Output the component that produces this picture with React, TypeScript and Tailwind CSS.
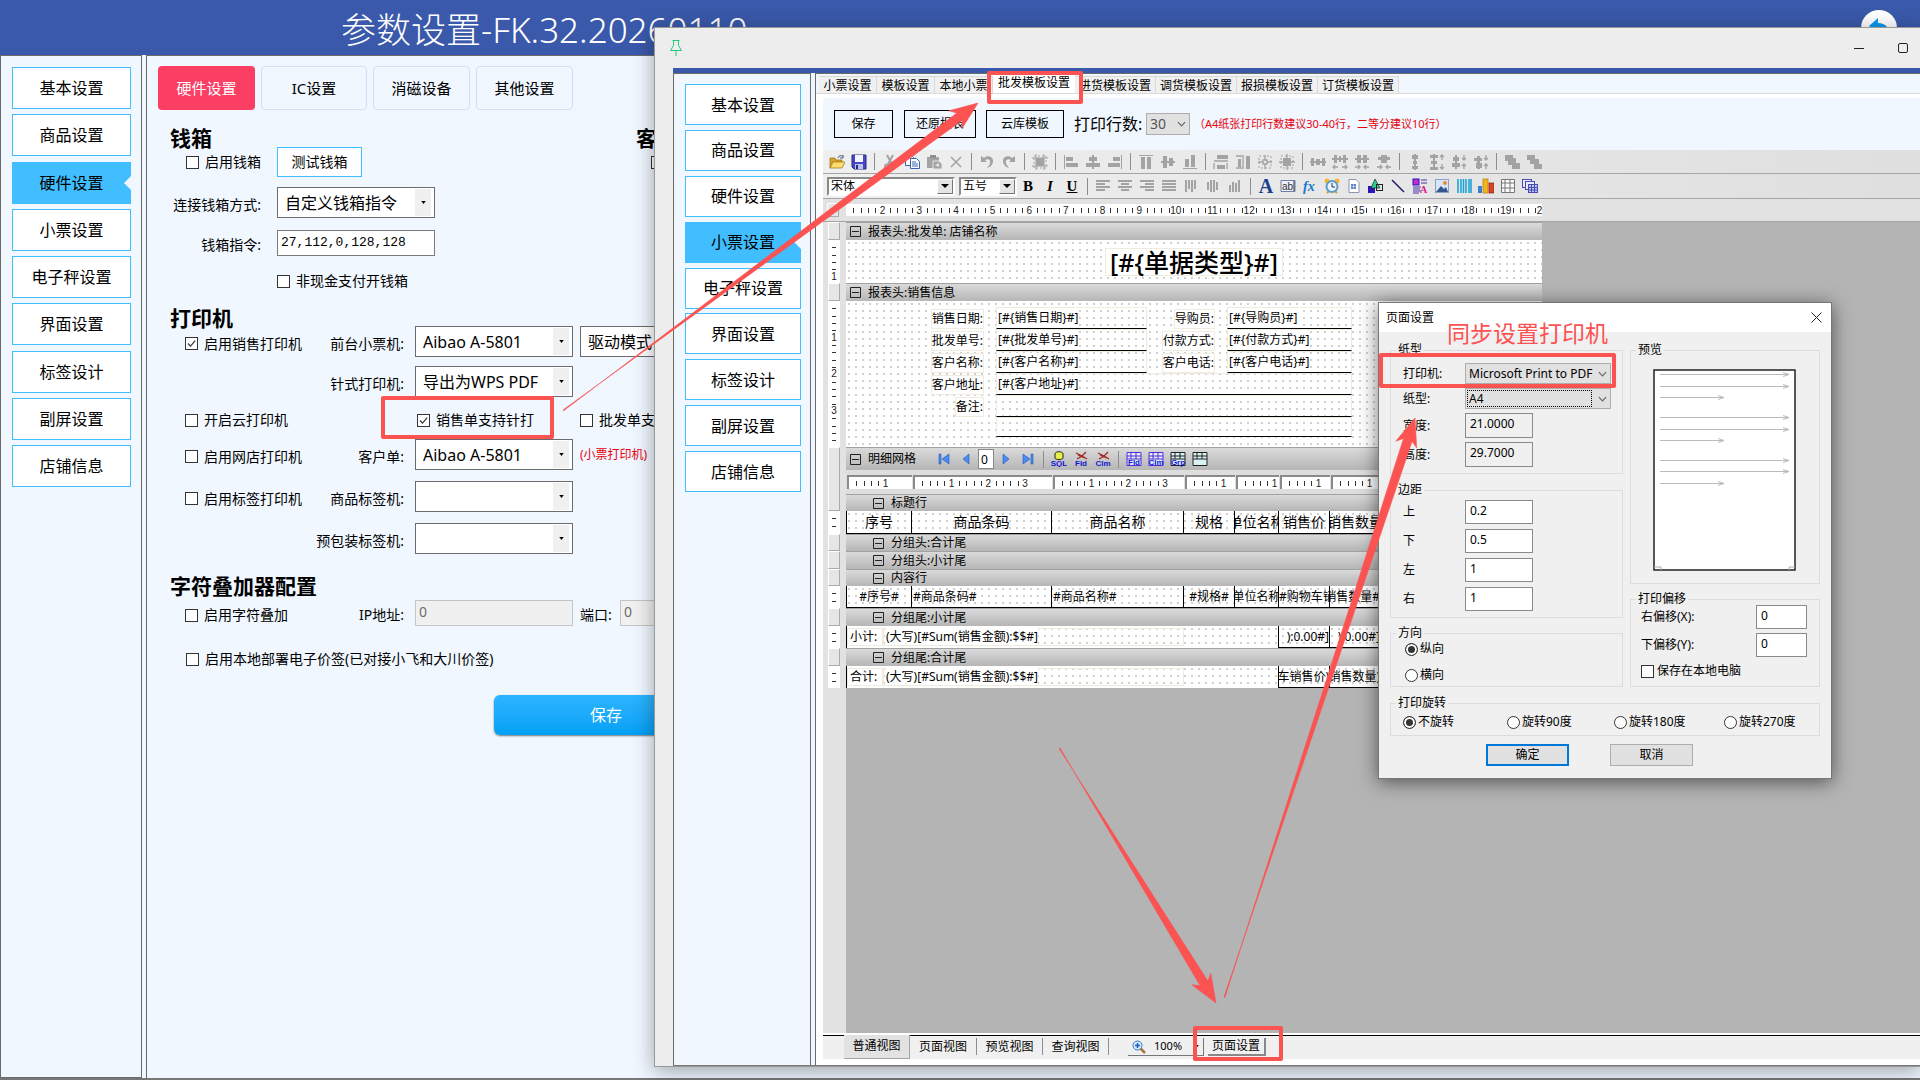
import React from 'react';

const NAV = ['基本设置', '商品设置', '硬件设置', '小票设置', '电子秤设置', '界面设置', '标签设计', '副屏设置', '店铺信息'];

/* ---------- shared controls ---------- */

interface CheckProps {
  label: string;
  checked?: boolean;
  className?: string;
  gap?: string;
}

const Check: React.FC<CheckProps> = ({ label, checked, className = '', gap = 'gap-1.5' }) => (
  <label className={`flex shrink-0 items-center whitespace-nowrap ${gap} ${className}`}>
    <span className="grid shrink-0">
      <input
        type="checkbox"
        defaultChecked={checked}
        className="peer col-start-1 row-start-1 size-[13px] appearance-none border border-[#333] bg-white"
      />
      <svg viewBox="0 0 13 13" className="pointer-events-none invisible col-start-1 row-start-1 size-[13px] peer-checked:visible">
        <path d="M3 6.5l2.5 2.7L10.2 3.6" fill="none" stroke="#333" strokeWidth="1.2" />
      </svg>
    </span>
    {label}
  </label>
);

interface ComboProps {
  id: string;
  value: string;
  className?: string;
}

const Combo: React.FC<ComboProps> = ({ id, value, className = 'w-[158px]' }) => (
  <div className={`grid h-[31px] shrink-0 ${className}`}>
    <select
      id={id}
      className="col-start-1 row-start-1 w-full appearance-none border border-[#6b6b6b] bg-white pl-[7px] text-base leading-7"
    >
      <option>{value}</option>
    </select>
    <span className="pointer-events-none col-start-1 row-start-1 mr-1 flex h-[27px] w-4 items-center justify-center self-center justify-self-end bg-[#f0f0f0]">
      <svg viewBox="0 0 6 4" className="h-[3px] w-[5px]"><path d="M0 0h6L3 4z" /></svg>
    </span>
  </div>
);

const SideNav: React.FC<{ active: string; className: string; item: string }> = ({ active, className, item }) => (
  <nav className={`flex flex-col justify-between ${className}`}>
    {NAV.map((name) =>
      name === active ? (
        <button key={name} className={`grid items-center bg-[#41beff] text-base ${item}`}>
          <span className="col-start-1 row-start-1">{name}</span>
          <svg viewBox="0 0 7 14" className="col-start-1 row-start-1 h-3.5 w-[7px] justify-self-end">
            <path d="M7 0L0 7l7 7z" fill="#f0f7ff" />
          </svg>
        </button>
      ) : (
        <button key={name} className={`border border-[#41beff] bg-white text-base ${item}`}>{name}</button>
      )
    )}
  </nav>
);

/* ---------- hardware form ---------- */

const Heading: React.FC<{ children: string; className?: string }> = ({ children, className = '' }) => (
  <h2 className={`text-[21px] leading-4 font-bold ${className}`}>{children}</h2>
);

interface PrinterRowProps {
  label: string;
  id: string;
  className?: string;
  check?: string;
  checked?: boolean;
  children: React.ReactNode;
}

const PrinterRow: React.FC<PrinterRowProps> = ({ label, id, check, checked, className = '', children }) => (
  <div className={`flex items-center ${className}`}>
    <div className="flex w-[245px] shrink-0 items-center pt-1 pr-[11px] pl-[15px]">
      {check && <Check label={check} checked={checked} />}
      <label htmlFor={id} className="ml-auto whitespace-nowrap">{label}</label>
    </div>
    {children}
  </div>
);

const HardwareForm = () => (
  <form className="flex w-[520px] flex-col pl-[23px] text-sm">
    <div className="flex w-[620px] justify-between pt-5">
      <Heading>钱箱</Heading>
      <div className="w-[154px]"><Heading>客显</Heading></div>
    </div>
    <div className="mt-px flex h-[30px] items-center">
      <div className="w-[107px] shrink-0 pl-4"><Check label="启用钱箱" /></div>
      <button type="button" className="h-[30px] w-[85px] shrink-0 border border-[#41beff] bg-white">测试钱箱</button>
      <Check label="启用客显" className="ml-[289px]" />
    </div>
    <div className="mt-2.5 flex items-center">
      <label htmlFor="box-mode" className="w-[107px] shrink-0 pt-1 pr-4 text-right whitespace-nowrap">连接钱箱方式:</label>
      <Combo id="box-mode" value="自定义钱箱指令" />
    </div>
    <div className="mt-3 flex items-center">
      <label htmlFor="box-cmd" className="w-[107px] shrink-0 pt-1 pr-4 text-right">钱箱指令:</label>
      <input id="box-cmd" defaultValue="27,112,0,128,128" className="h-[26px] w-[158px] border border-[#7a7a7a] bg-white px-[3px] pb-0.5 font-['Liberation_Mono',monospace] text-[13px]" />
    </div>
    <Check label="非现金支付开钱箱" className="mt-[15px] ml-[107px] h-5" />

    <Heading className="mt-[19px]">打印机</Heading>
    <PrinterRow id="front" label="前台小票机:" check="启用销售打印机" checked>
      <Combo id="front" value="Aibao A-5801" />
      <Combo id="mode" value="驱动模式" className="ml-[7px] w-[158px]" />
    </PrinterRow>
    <PrinterRow id="dot" label="针式打印机:" className="mt-[9px]">
      <Combo id="dot" value="导出为WPS PDF" />
    </PrinterRow>
    <div className="mt-3 flex h-[22px] items-center pl-[15px]">
      <Check label="开启云打印机" className="w-[232px]" />
      <Check label="销售单支持针打" checked className="w-[163px]" />
      <Check label="批发单支持针打" />
    </div>
    <PrinterRow id="customer" label="客户单:" check="启用网店打印机" className="mt-2">
      <Combo id="customer" value="Aibao A-5801" />
      <span className="ml-[7px] text-xs whitespace-nowrap text-red-600">(小票打印机)</span>
    </PrinterRow>
    <PrinterRow id="goods-label" label="商品标签机:" check="启用标签打印机" className="mt-[11px]">
      <Combo id="goods-label" value="" />
    </PrinterRow>
    <PrinterRow id="pack-label" label="预包装标签机:" className="mt-[11px]">
      <Combo id="pack-label" value="" />
    </PrinterRow>

    <Heading className="mt-6">字符叠加器配置</Heading>
    <PrinterRow id="ip" label="IP地址:" check="启用字符叠加" className="mt-1.5">
      <input id="ip" disabled defaultValue="0" className="h-[26px] w-[158px] shrink-0 border border-[#c4c4c4] bg-[#f0f0f0] px-[3px] pb-1 text-[#6d6d6d]" />
      <label htmlFor="port" className="ml-[7px] w-10 shrink-0 pt-1">端口:</label>
      <input id="port" disabled defaultValue="0" className="h-[26px] w-20 shrink-0 border border-[#c4c4c4] bg-[#f0f0f0] px-[3px] pb-1 text-[#6d6d6d]" />
    </PrinterRow>
    <Check label="启用本地部署电子价签(已对接小飞和大川价签)" className="mt-[23px] ml-4 h-5" />
    <button type="button" className="mt-[26px] ml-[324px] h-10 w-56 rounded-md bg-linear-to-b from-[#2cb4ff] to-[#00a0f5] text-base text-white shadow-[0_1px_2px_#777]">
      保存
    </button>
  </form>
);

/* ---------- designer icons, 16x16 ---------- */

const G = '#a3a3a3';

const bars = (rows: number[][]) => rows.map(([x, y, w, h], i) => <rect key={i} x={x} y={y} width={w} height={h} fill={G} />);

const arrows = (d: string) => <path d={d} fill="none" stroke={G} strokeWidth="1.3" />;

const dashBox = <rect x="2" y="2" width="12" height="12" fill="none" stroke={G} strokeDasharray="2 2" />;

const ICONS: Record<string, React.ReactNode> = {
  open: (
    <>
      <path d="M1 14V4h5l1 2h6v3z" fill="#d9a326" stroke="#94701a" strokeWidth=".7" />
      <path d="M1 14l3-6h12l-3 6z" fill="#ffdc6b" stroke="#94701a" strokeWidth=".7" />
      <path d="M9 4c1-3 4-3 5-1m0-2v3h-3" fill="none" stroke="#44597d" />
    </>
  ),
  save: (
    <>
      <path d="M1 1h14v14H3l-2-2z" fill="#4747c4" stroke="#2a2a86" />
      <rect x="4" y="1" width="8" height="7" fill="#f2f5ff" />
      <rect x="4" y="10" width="8" height="5" fill="#b8c4e8" />
      <rect x="5" y="11" width="2" height="4" fill="#26267c" />
    </>
  ),
  cut: (
    <g stroke={G} fill="none" strokeWidth="2">
      <path d="M5 1l5 9M11 1L6 10" />
      <circle cx="5" cy="12.500" r="2" /><circle cx="11" cy="12.500" r="2" />
    </g>
  ),
  copy: (
    <g stroke="#3563b4" fill="#fff">
      <path d="M1.500 1.500h6l2 2v8h-8z" /><path d="M6.500 4.500h6l3 3v7h-9z" />
      <path d="M8 8h4M8 10h6M8 12h6" />
    </g>
  ),
  paste: (
    <>
      <path d="M1 3h12v11H1z" fill={G} /><rect x="4" y="1" width="6" height="3" fill="#8f8f8f" />
      <path d="M7 7h6l3 3v5H7z" fill={G} stroke="#e6e6e6" /><path d="M9 11l4-2v4z" fill="#e6e6e6" />
    </>
  ),
  del: <path d="M3 3l10 10M13 3L3 13" stroke={G} strokeWidth="1.500" />,
  undo: <path d="M2 2v6h6L6 6c3-2 6 0 5 3 0 2-2 3-3 5 4-1 6-4 6-7 0-5-6-6-9-3z" fill={G} />,
  redo: <path d="M14 2v6H8l2-2C7 4 4 6 5 9c0 2 2 3 3 5-4-1-6-4-6-7 0-5 6-6 9-3z" fill={G} />,
  sel: <>{dashBox}{bars([[4, 4, 8, 8]])}<path d="M4 0v16M12 0v16M0 4h16M0 12h16" stroke={G} /></>,
  left: bars([[1, 1, 1, 14], [3, 3, 7, 4], [3, 9, 12, 4]]),
  center: bars([[7, 1, 2, 14], [4, 3, 8, 4], [1, 9, 14, 4]]),
  right: bars([[14, 1, 1, 14], [6, 3, 7, 4], [1, 9, 12, 4]]),
  top: bars([[1, 1, 14, 1], [3, 3, 4, 12], [9, 3, 4, 12]]),
  middle: bars([[1, 7, 14, 2], [3, 2, 4, 12], [9, 4, 4, 8]]),
  bottom: bars([[1, 14, 14, 1], [3, 5, 4, 8], [9, 1, 4, 12]]),
  sameW: <>{bars([[4, 1, 11, 4], [4, 11, 8, 4]])}{arrows('M1 7h14M1 9v6M14 9v6')}</>,
  sameH: <>{bars([[11, 2, 4, 13], [3, 5, 3, 8]])}{arrows('M1 2h6M1 14h6M8 1v14')}</>,
  grow: <>{dashBox}{arrows('M8 1v5M8 10v5M1 8h5M10 8h5M6 6h4v4H6z')}</>,
  sameSize: <>{dashBox}{bars([[4, 4, 8, 8]])}{arrows('M8 0v16M0 8h16')}</>,
  hs: bars([[0, 7, 16, 2], [1, 4, 3, 8], [6, 5, 4, 6], [12, 4, 3, 8]]),
  hs2: <>{bars([[0, 4, 16, 2], [2, 1, 3, 8], [11, 1, 3, 8], [7, 2, 2, 6]])}{arrows('M1 13h5M10 13h5M3 11l-2 2 2 2M13 11l2 2-2 2')}</>,
  hs3: <>{bars([[1, 4, 14, 2], [3, 1, 4, 8], [9, 1, 4, 8]])}{arrows('M1 13h5M10 13h5M4 11l2 2-2 2M12 11l-2 2 2 2')}</>,
  hs4: <>{bars([[2, 3, 12, 3], [5, 1, 6, 8]])}{arrows('M1 13h5M10 13h5M4 11l2 2-2 2M12 11l-2 2 2 2')}</>,
  vs: bars([[7, 0, 2, 16], [5, 1, 6, 4], [6, 7, 4, 3], [5, 12, 6, 3]]),
  vs2: <>{bars([[4, 0, 2, 16], [1, 1, 8, 3], [2, 7, 6, 3], [1, 13, 8, 3]])}{arrows('M13 1v5M13 10v5M11 3l2-2 2 2M11 13l2 2 2-2')}</>,
  vs3: <>{bars([[4, 1, 2, 14], [2, 3, 6, 4], [1, 9, 8, 4]])}{arrows('M13 1v5M13 10v5M11 4l2 2 2-2M11 12l2-2 2 2')}</>,
  vs4: <>{bars([[4, 2, 3, 13], [1, 4, 8, 3], [3, 9, 6, 5]])}{arrows('M13 1v5M13 10v5M11 4l2 2 2-2M11 12l2-2 2 2')}</>,
  front: bars([[1, 1, 8, 6], [4, 4, 8, 7], [8, 9, 8, 6]]),
  back: bars([[1, 1, 8, 5], [4, 5, 9, 5], [8, 10, 8, 5]]),
  tl: bars([[1, 2, 14, 2], [1, 5, 9, 2], [1, 8, 14, 2], [1, 11, 9, 2]]),
  tc: bars([[1, 2, 14, 2], [4, 5, 8, 2], [1, 8, 14, 2], [4, 11, 8, 2]]),
  tr: bars([[1, 2, 14, 2], [6, 5, 9, 2], [1, 8, 14, 2], [6, 11, 9, 2]]),
  tj: bars([[1, 2, 14, 2], [1, 5, 14, 2], [1, 8, 14, 2], [1, 11, 14, 2]]),
  vt: bars([[2, 2, 2, 12], [5, 2, 2, 9], [8, 2, 2, 12], [11, 2, 2, 9]]),
  vm: bars([[2, 4, 2, 8], [5, 2, 2, 12], [8, 2, 2, 12], [11, 4, 2, 8]]),
  vb: bars([[2, 7, 2, 7], [5, 4, 2, 10], [8, 5, 2, 9], [11, 2, 2, 12]]),
  fx: <text x="1" y="13" fontSize="14" fontStyle="italic" fontWeight="bold" fontFamily="Liberation Serif" fill="#1b79c9">fx</text>,
  ab: (
    <>
      <path d="M1 2.500h14v11H1z" fill="#eef" stroke="#6f7ea3" />
      <text x="2" y="12" fontSize="10" fontFamily="Liberation Sans" fill="#333">ab</text>
      <path d="M14 3v10" stroke="#333" />
    </>
  ),
  clock: (
    <>
      <circle cx="3" cy="3" r="2.500" fill="#f7b42c" /><circle cx="13" cy="3" r="2.500" fill="#f7b42c" />
      <path d="M3 15l2-2M13 15l-2-2" stroke="#e09a1c" strokeWidth="2" />
      <circle cx="8" cy="8.500" r="5.500" fill="#e9f4ff" stroke="#5a9bd0" strokeWidth="2" />
      <path d="M8 5v4h3" fill="none" stroke="#333" />
    </>
  ),
  page: (
    <>
      <path d="M3 1.500h7l3 3v10H3z" fill="#fff" stroke="#8a94b5" />
      <path d="M6 6v5M9 6v5M5 7h5M5 10h5" stroke="#2d62b8" />
    </>
  ),
  shape: (
    <>
      <rect x="0" y="8" width="7" height="7" fill="#2a15b8" />
      <path d="M7 1l5 9H3z" fill="#2dcf8d" stroke="#222" strokeWidth=".7" />
      <rect x="8.500" y="6.500" width="6" height="6" fill="none" stroke="#222" />
    </>
  ),
  line: <path d="M2 2l12 12" stroke="#1d1d6b" strokeWidth="1.500" />,
  rich: (
    <>
      <rect x="1" y="1" width="6" height="6" fill="#c32ccf" stroke="#2a15b8" />
      <path d="M9 2h6M9 5h6M1 9h8M1 11h7M1 13h8M1 15h6" stroke="#4234a8" />
      <text x="8" y="15" fontSize="10" fontWeight="bold" fontFamily="Liberation Serif" fill="#e0148c">A</text>
    </>
  ),
  image: (
    <>
      <rect x="1.500" y="1.500" width="13" height="13" fill="#d4e7fb" stroke="#8aa0c4" />
      <path d="M2 14l5-6 3 3 2-2 2 5z" fill="#35568f" /><circle cx="11" cy="5" r="2" fill="#f08a24" />
    </>
  ),
  barcode: <path d="M2 1v14M5 1v14M7.500 1v14M10 1v14M13 1v14M15 1v14" stroke="#13a0d6" strokeWidth="1.500" />,
  chart: (
    <>
      <rect x="0" y="8" width="4" height="7" fill="#3c7fd0" /><rect x="5" y="1" width="5" height="14" fill="#f2b51d" stroke="#b57905" strokeWidth=".7" />
      <rect x="11" y="5" width="5" height="10" fill="#d8442a" stroke="#8f2411" strokeWidth=".7" />
    </>
  ),
  grid: <path d="M1.500 1.500h13v13h-13zM1 5h14M1 10h14M5 1v13M10 1v13" fill="#fafafa" stroke="#777" />,
  sub: (
    <g fill="#e8e8ff" stroke="#4c4cab">
      <rect x="0.500" y="1.500" width="9" height="8" /><rect x="3.500" y="3.500" width="9" height="8" />
      <rect x="6.500" y="6.500" width="9" height="8" fill="#b4c8ff" /><path d="M6 9.500h9M6 12h9M9.500 7v7M12.500 7v7" />
    </g>
  ),
};

const Icon: React.FC<{ name: string }> = ({ name }) => (
  <button className="flex w-[22px] shrink-0 justify-center" aria-label={name}>
    <svg viewBox="0 0 16 16" className="size-4">{ICONS[name]}</svg>
  </button>
);

const Sep: React.FC<{ className?: string }> = ({ className = 'mx-1' }) => (
  <span className={`h-[17px] w-px shrink-0 bg-[#8d8d8d] ${className}`} />
);

const TOOLS = [
  ['open', 'save'], ['cut', 'copy', 'paste', 'del'], ['undo', 'redo'], ['sel'], ['left', 'center', 'right'],
  ['top', 'middle', 'bottom'], ['sameW', 'sameH', 'grow', 'sameSize'], ['hs', 'hs2', 'hs3', 'hs4'],
  ['vs', 'vs2', 'vs3', 'vs4'], ['front', 'back'],
];

const OldSelect: React.FC<{ label: string; value: string; className: string }> = ({ label, value, className }) => (
  <div className={`grid h-[19px] shrink-0 ${className}`}>
    <select aria-label={label} className="col-start-1 row-start-1 appearance-none border-2 border-t-[#8a8a8a] border-r-white border-b-white border-l-[#8a8a8a] bg-white pl-0.5 text-xs leading-none">
      <option>{value}</option>
    </select>
    <span className="pointer-events-none col-start-1 row-start-1 mr-0.5 flex h-[15px] w-4 items-center justify-center self-center justify-self-end border border-t-white border-r-[#777] border-b-[#777] border-l-white bg-[#e4e4e4]">
      <svg viewBox="0 0 8 4" className="h-1 w-2"><path d="M0 0h8L4 4z" /></svg>
    </span>
  </div>
);

/* ---------- rulers ---------- */

const UNIT = 36.65;

const HRuler: React.FC<{ from?: number; count: number }> = ({ from = 0, count }) => (
  <svg className="h-3 w-full" aria-hidden="true">
    {Array.from({ length: count * 5 }, (_, i) => i + 1).map((i) =>
      i % 5 === 0 ? (
        <text key={i} x={(i / 5) * UNIT} y="10" fontSize="10" textAnchor="middle" fontFamily="Liberation Sans" fill="#222">
          {from + i / 5}
        </text>
      ) : (
        <path key={i} d={`M${Math.round((i * UNIT) / 5)}.5 4v5`} stroke="#333" />
      )
    )}
  </svg>
);

const VRuler: React.FC<{ className: string; count: number }> = ({ className, count }) => (
  <svg className={`w-full bg-white ${className}`} aria-hidden="true">
    {Array.from({ length: count }, (_, i) => i + 1).map((i) =>
      i % 5 === 0 ? (
        <text key={i} x="6" y={(i / 5) * UNIT + 3} fontSize="10" textAnchor="middle" fontFamily="Liberation Sans" fill="#222">{i / 5}</text>
      ) : (
        <path key={i} d={`M4 ${Math.round((i * UNIT) / 5)}.5h4`} stroke="#333" />
      )
    )}
  </svg>
);

const GutterBlock: React.FC<{ className: string }> = ({ className }) => (
  <div className={`border border-t-white border-r-[#aaa] border-b-[#aaa] border-l-white bg-[#e6e6e6] ${className}`} />
);

/* ---------- report bands ---------- */

const DOTS = 'bg-white bg-[radial-gradient(circle_at_3px_3px,#d0d0d0_1px,transparent_1px)] bg-[size:7px_7px]';

const Collapse = () => (
  <svg viewBox="0 0 11 11" className="size-[11px] shrink-0"><path d="M.5.5h10v10H.5zM2 5.500h7" fill="none" stroke="#222" /></svg>
);

const Band: React.FC<{ title: string; className: string; children?: React.ReactNode }> = ({ title, className, children }) => (
  <div className={`flex items-center border-t border-[#a2a2a2] bg-linear-to-b from-[#dadada] to-[#b6b6b6] text-xs leading-none whitespace-nowrap ${className}`}>
    <Collapse />
    <span className="ml-[7px]">{title}</span>
    {children}
  </div>
);

const BandRow: React.FC<{ title: string; className: string }> = ({ title, className }) => (
  <tr><td colSpan={8} className="p-0"><Band title={title} className={`pl-[27px] ${className}`} /></td></tr>
);

const FieldLabel = ({ children }: { children: string }) => (
  <div className="flex items-end justify-end pr-3"><span className="border border-[#efecdf] bg-white leading-[18px]">{children}</span></div>
);

const FieldValue: React.FC<{ text?: string; className?: string }> = ({ text, className = '' }) => (
  <div className={`border border-[#efecdf] border-b-black pl-px leading-5 ${className}`}><span className="bg-white">{text}</span></div>
);

const Cell: React.FC<{ text: string; align?: string; className?: string }> = ({ text, align = 'justify-center', className = '' }) => (
  <td className={`border-r border-b border-black p-0 ${className}`}>
    <div className={`flex overflow-hidden whitespace-nowrap ${align}`}><span className="shrink-0">{text}</span></div>
  </td>
);

const TotalRow: React.FC<{ label: string; a: string; b: string }> = ({ label, a, b }) => (
  <tr className={`h-[22px] text-xs ${DOTS}`}>
    <td colSpan={3} className="border-l border-black p-0">
      <div className="flex items-center">
        <span className="w-9 border border-[#efecdf] bg-white pl-0.5">{label}</span>
        <span className="flex-1 border border-[#efecdf] pl-0.5"><span className="bg-white">(大写)[#Sum(销售金额):$$#]</span></span>
      </div>
    </td>
    <td />
    <td className="border-r border-black" />
    <Cell text={a} align="justify-end" />
    <Cell text={b} align="justify-end" />
    <td />
  </tr>
);

const GridIcon: React.FC<{ text?: string; color: string }> = ({ text, color }) => (
  <svg viewBox="0 0 16 16" className="mx-[3px] size-4 shrink-0">
    <path d="M1 1.500h14v13H1zM1 5h14M1 8h14M5 1v7M10 1v7" fill="#d9f2f5" stroke={color} />
    {text && <text x="8" y="14" fontSize="8" fontWeight="bold" textAnchor="middle" fontFamily="Liberation Sans" fill="#1414d8">{text}</text>}
  </svg>
);

const ToolIcon: React.FC<{ text: string }> = ({ text }) => (
  <svg viewBox="0 0 16 16" className="mx-[3px] size-4 shrink-0">
    {text === 'SQL' ? (
      <path d="M4 3c0-3 8-3 8 0v4c0 2-8 2-8 0z" fill="#e9f04a" stroke="#222" />
    ) : (
      <path d="M3 2l6 3 4-4M4 8l5-3 5 3M5 4l7 3" fill="none" stroke="#a02828" strokeWidth="1.300" />
    )}
    <text x="8" y="15" fontSize="8" fontWeight="bold" textAnchor="middle" fontFamily="Liberation Sans" fill="#1414d8">{text}</text>
  </svg>
);

const PagerIcon: React.FC<{ d: string; className?: string }> = ({ d, className = '' }) => (
  <button className={`mx-[5px] shrink-0 ${className}`} aria-label="翻页">
    <svg viewBox="0 0 12 12" className="size-3"><path d={d} fill="#4b8cf0" stroke="#2257b8" strokeWidth=".6" /></svg>
  </button>
);

const ReportTable = () => (
  <table className="w-full table-fixed border-separate border-spacing-0">
    <colgroup>
      <col className="w-[66px]" /><col className="w-[140px]" /><col className="w-[132px]" /><col className="w-[51px]" />
      <col className="w-11" /><col className="w-[51px]" /><col className="w-[51px]" /><col />
    </colgroup>
    <tbody>
      <BandRow title="标题行" className="h-[17px]" />
      <tr className={`h-[23px] text-sm leading-5 ${DOTS}`}>
        <Cell text="序号" className="border-l" />
        {['商品条码', '商品名称', '规格', '单位名称', '销售价', '销售数量', '金额'].map((t) => <Cell key={t} text={t} />)}
      </tr>
      <BandRow title="分组头:合计尾" className="h-[17px]" />
      <BandRow title="分组头:小计尾" className="h-[18px]" />
      <BandRow title="内容行" className="h-[17px]" />
      <tr className={`h-[22px] text-xs ${DOTS}`}>
        <Cell text="#序号#" className="border-l" />
        <Cell text="#商品条码#" align="justify-start" className="pl-px" />
        <Cell text="#商品名称#" align="justify-start" className="pl-px" />
        <Cell text="#规格#" />
        <Cell text="单位名称" />
        <Cell text="#购物车销售价#" align="justify-start" />
        <Cell text="销售数量#" align="justify-end" />
        <Cell text="#金额#" />
      </tr>
      <BandRow title="分组尾:小计尾" className="h-[18px]" />
      <TotalRow label="小计:" a="):0.00#]" b="):0.00#]" />
      <BandRow title="分组尾:合计尾" className="h-[18px]" />
      <TotalRow label="合计:" a="车销售价)" b="销售数量)" />
    </tbody>
  </table>
);

const Gutter = () => (
  <div className="w-[23px] shrink-0 bg-[#e2e2e2] pr-1.5 pl-[5px]">
    <GutterBlock className="h-[18px]" />
    <VRuler className="h-[43px]" count={5} />
    <GutterBlock className="h-[18px]" />
    <VRuler className="h-[146px]" count={19} />
    <GutterBlock className="h-16" />
    <VRuler className="h-[23px]" count={2} />
    <GutterBlock className="h-[17px]" />
    <GutterBlock className="h-[18px]" />
    <GutterBlock className="h-[17px]" />
    <VRuler className="h-[22px]" count={2} />
    <GutterBlock className="h-[18px]" />
    <VRuler className="h-[22px]" count={2} />
    <GutterBlock className="h-[18px]" />
    <VRuler className="h-[22px]" count={2} />
  </div>
);

const COLUMN_RULERS = [
  { w: 'w-[66px]', count: 1 },
  { w: 'w-[140px]', count: 3 },
  { w: 'w-[132px]', count: 3 },
  { w: 'w-[51px]', count: 1 },
  { w: 'w-11', count: 1 },
  { w: 'w-[51px]', count: 1 },
  { w: 'w-[51px]', count: 1 },
];

const Report = () => (
  <div className="w-[696px] shrink-0">
    <Band title="报表头:批发单: 店铺名称" className="h-[18px] pl-1" />
    <div className={`flex h-[43px] items-center justify-center ${DOTS}`}>
      <span className="border border-[#efecdf] bg-white px-1 text-[25px] leading-[26px] font-medium">[#{'{'}单据类型{'}'}#]</span>
    </div>
    <Band title="报表头:销售信息" className="h-[18px] pl-1" />
    <div className={`grid h-[146px] auto-rows-[22px] grid-cols-[150px_151px_80px_125px] pt-1.5 text-xs whitespace-nowrap ${DOTS}`}>
      <FieldLabel>销售日期:</FieldLabel><FieldValue text="[#{销售日期}#]" />
      <FieldLabel>导购员:</FieldLabel><FieldValue text="[#{导购员}#]" />
      <FieldLabel>批发单号:</FieldLabel><FieldValue text="[#{批发单号}#]" />
      <FieldLabel>付款方式:</FieldLabel><FieldValue text="[#{付款方式}#]" />
      <FieldLabel>客户名称:</FieldLabel><FieldValue text="[#{客户名称}#]" />
      <FieldLabel>客户电话:</FieldLabel><FieldValue text="[#{客户电话}#]" />
      <FieldLabel>客户地址:</FieldLabel><FieldValue text="[#{客户地址}#]" className="col-span-3" />
      <FieldLabel>备注:</FieldLabel><FieldValue className="col-span-3" />
      <FieldValue className="col-span-3 col-start-2 h-5" />
    </div>
    <Band title="明细网格" className="h-[23px] pl-1">
      <PagerIcon className="ml-[22px]" d="M1 1h2v10H1zM11 1v10L4 6z" />
      <PagerIcon d="M9 1v10L3 6z" />
      <input aria-label="当前记录" defaultValue="0" className="mx-px h-5 w-4 border border-[#888] bg-white pl-0.5" />
      <PagerIcon d="M3 1v10l6-5z" />
      <PagerIcon d="M9 1h2v10H9zM1 1v10l7-5z" />
      <Sep className="mx-1" />
      <ToolIcon text="SQL" /><ToolIcon text="Fld" /><ToolIcon text="Clm" />
      <Sep className="mx-1" />
      <GridIcon text="Fld" color="#5a28d8" /><GridIcon text="Clm" color="#5a28d8" /><GridIcon text="Grp" color="#222" /><GridIcon color="#222" />
    </Band>
    <div className="flex h-6 items-center bg-[#dedede]">
      {COLUMN_RULERS.map(({ w, count }, i) => (
        <div key={i} className={`shrink-0 pl-px ${w}`}>
          <div className="overflow-hidden border-t-2 border-l-2 border-[#8a8a8a] bg-white"><HRuler count={count} /></div>
        </div>
      ))}
    </div>
    <ReportTable />
  </div>
);

/* ---------- template designer ---------- */

const TABS = ['小票设置', '模板设置', '本地小票', '批发模板设置', '进货模板设置', '调货模板设置', '报损模板设置', '订货模板设置'];

const ActionButton: React.FC<{ children: string; className: string }> = ({ children, className }) => (
  <button className={`h-7 shrink-0 border border-black text-xs ${className}`}>{children}</button>
);

const Chevron: React.FC<{ className?: string }> = ({ className = '' }) => (
  <svg viewBox="0 0 10 6" className={`pointer-events-none col-start-1 row-start-1 h-1.5 w-[9px] self-center justify-self-end ${className}`}>
    <path d="M1 1l4 4 4-4" fill="none" stroke="#666" strokeWidth="1.300" />
  </svg>
);

const Designer = () => (
  <section className="flex min-w-0 flex-1 flex-col border-t border-l border-[#6b6b6b] bg-white">
    <div role="tablist" className="flex h-5 items-end border-b border-[#d9d9d9] bg-[#f0f7ff] pl-[3px] text-xs">
      {TABS.map((tab) =>
        tab === '批发模板设置' ? (
          <button key={tab} role="tab" aria-selected="true" className="h-5 w-[82px] bg-white leading-5">{tab}</button>
        ) : (
          <button key={tab} role="tab" className={`h-[17px] border-t border-r border-[#d9d9d9] bg-[#f0f0f0] leading-[18px] whitespace-nowrap ${tab.length > 4 ? 'w-[81px]' : 'w-[58px]'}`}>
            {tab}
          </button>
        )
      )}
    </div>

    <div className="mt-1 ml-[7px] flex min-h-0 flex-1 flex-col">
      <div className="flex h-[52px] items-center bg-[#f0f7ff] pl-[11px]">
        <ActionButton className="w-[59px]">保存</ActionButton>
        <ActionButton className="ml-[11px] w-[72px]">还原报表</ActionButton>
        <ActionButton className="ml-2.5 w-[78px]">云库模板</ActionButton>
        <label htmlFor="rows" className="ml-2.5 w-[72px] text-base whitespace-nowrap">打印行数:</label>
        <div className="grid">
          <select id="rows" className="col-start-1 row-start-1 h-[22px] w-11 appearance-none border border-[#adadad] bg-[#e1e1e1] pl-[3px] text-sm leading-none text-[#555]">
            <option>30</option>
          </select>
          <Chevron className="mr-1" />
        </div>
        <p className="ml-1 text-[11px] text-red-600">（A4纸张打印行数建议30-40行，二等分建议10行）</p>
      </div>

      <div className="flex h-6 items-center border-b border-[#a5a5a5] bg-linear-to-r from-[#efefef] to-[#dfdfdf] pl-[3px]">
        {TOOLS.map((group, i) => (
          <React.Fragment key={i}>
            {i > 0 && <Sep />}
            {group.map((name) => <Icon key={name} name={name} />)}
          </React.Fragment>
        ))}
      </div>

      <div className="flex h-[25px] items-center border-b border-[#a5a5a5] bg-linear-to-r from-[#efefef] to-[#dfdfdf] pl-1">
        <OldSelect label="字体" value="宋体" className="w-32" />
        <OldSelect label="字号" value="五号" className="ml-1 w-[58px]" />
        <button className="w-[22px] font-['Liberation_Serif',serif] text-[15px] font-bold">B</button>
        <button className="w-[22px] font-['Liberation_Serif',serif] text-[15px] font-bold italic">I</button>
        <button className="w-[22px] font-['Liberation_Serif',serif] text-[15px] font-bold underline">U</button>
        <Sep />
        {['tl', 'tc', 'tr', 'tj', 'vt', 'vm', 'vb'].map((name) => <Icon key={name} name={name} />)}
        <Sep />
        <button className="w-[22px] font-['Liberation_Serif',serif] text-xl leading-none font-bold text-[#1d3f8f]">A</button>
        {['ab', 'fx', 'clock', 'page', 'shape', 'line', 'rich', 'image', 'barcode', 'chart', 'grid', 'sub'].map((name) => <Icon key={name} name={name} />)}
      </div>

      <div className="flex h-[23px] items-center border-b border-[#a5a5a5] bg-[#e2e2e2] pl-1">
        <GutterBlock className="mr-[7px] h-3.5 w-3" />
        <div className="w-[696px] overflow-hidden bg-white"><HRuler from={1} count={19} /></div>
      </div>

      <div className="flex min-h-0 flex-1 overflow-hidden bg-[#b4b4b4]">
        <Gutter />
        <Report />
      </div>

      <footer className="mt-0.5 mb-1.5 flex h-6 items-stretch border-t border-black bg-[#f0f0f0] text-xs">
        <button className="-mt-px ml-[21px] w-[66px] border-r border-b border-[#a5a5a5] bg-[#e2e2e2] pb-0.5">普通视图</button>
        <button className="w-[66px] pb-0.5">页面视图</button>
        <Sep className="mt-0.5" />
        <button className="w-[65px] pb-0.5">预览视图</button>
        <Sep className="mt-0.5" />
        <button className="w-[65px] pb-0.5">查询视图</button>
        <Sep className="mt-0.5" />
        <button className="mt-0.5 ml-[19px] flex h-[18px] w-[76px] items-center border-r border-b border-[#777] pl-1">
          <svg viewBox="0 0 14 14" className="size-3.5">
            <path d="M8 8l5 5" stroke="#a8763a" strokeWidth="2.500" />
            <circle cx="5.500" cy="5.500" r="4.500" fill="#d7ecff" stroke="#2e78c8" />
            <path d="M3 5.500h5M5.500 3v5" stroke="#1e5fb8" strokeWidth="1.500" />
          </svg>
          <span className="ml-2 text-[11px]">100%</span>
          <svg viewBox="0 0 6 4" className="mr-1 ml-auto h-[3px] w-[5px]"><path d="M0 0h6L3 4z" /></svg>
        </button>
        <button className="mt-0.5 ml-1 h-[18px] w-[58px] border-r-2 border-b-2 border-[#888] leading-none">页面设置</button>
      </footer>
    </div>
  </section>
);

/* ---------- page setup dialog ---------- */

interface GroupProps {
  title: string;
  className: string;
  body: string;
  children: React.ReactNode;
}

const Group: React.FC<GroupProps> = ({ title, className, body, children }) => (
  <fieldset className={`border border-[#dcdcdc] ${className}`}>
    <legend className="ml-[5px] px-0.5 leading-3">{title}</legend>
    <div className={body}>{children}</div>
  </fieldset>
);

const DialogSelect: React.FC<{ id: string; label: string; value: string; focused?: boolean }> = ({ id, label, value, focused }) => (
  <div className="flex items-center">
    <label htmlFor={id} className="w-[62px]">{label}</label>
    <div className="grid">
      <select id={id} className="col-start-1 row-start-1 h-[21px] w-[146px] appearance-none border border-[#adadad] bg-[#e1e1e1] pl-[3px] text-xs leading-none">
        <option>{value}</option>
      </select>
      {focused && <span className="pointer-events-none col-start-1 row-start-1 m-0.5 mr-[19px] border border-dotted border-black" />}
      <Chevron className="mr-1" />
    </div>
  </div>
);

interface DialogInputProps {
  id: string;
  label: string;
  value: string;
  readOnly?: boolean;
}

const DialogInput: React.FC<DialogInputProps> = ({ id, label, value, readOnly }) => (
  <div className="flex items-center">
    <label htmlFor={id} className="w-[62px]">{label}</label>
    <input
      id={id}
      defaultValue={value}
      readOnly={readOnly}
      className={`w-[68px] border border-[#8a8a8a] px-1 pb-1 ${readOnly ? 'h-[25px] bg-[#f0f0f0]' : 'h-6 bg-white'}`}
    />
  </div>
);

const Radio: React.FC<{ name: string; label: string; checked?: boolean; className?: string }> = ({ name, label, checked, className = '' }) => (
  <label className={`flex h-4 items-center gap-0.5 whitespace-nowrap ${className}`}>
    <input
      type="radio"
      name={name}
      defaultChecked={checked}
      className="size-[13px] appearance-none rounded-full border border-[#333] bg-white checked:bg-[#333] checked:shadow-[inset_0_0_0_2px_white]"
    />
    {label}
  </label>
);

const PREVIEW_LINES = [5, 17, 28, 48, 60, 71, 91, 102, 114];

const PageSetup = () => (
  <div role="dialog" aria-label="页面设置" className="absolute top-[302px] left-[1378px] w-[454px] border border-[#777] bg-[#f0f0f0] text-xs shadow-[0_3px_18px_rgba(0,0,0,0.55)]">
    <header className="flex h-[29px] items-center justify-between bg-white pr-[9px] pl-[7px]">
      <h1>页面设置</h1>
      <button aria-label="关闭">
        <svg viewBox="0 0 11 11" className="size-[11px]"><path d="M.5.5l10 10M10.500.5l-10 10" stroke="#222" /></svg>
      </button>
    </header>
    <form className="px-[11px] pt-3 pb-3">
      <div className="flex gap-[7px]">
        <div className="w-[233px]">
          <Group title="纸型" className="h-[130px]" body="flex flex-col gap-1 pt-[7px] pl-3">
            <DialogSelect id="printer" label="打印机:" value="Microsoft Print to PDF" />
            <DialogSelect id="paper" label="纸型:" value="A4" focused />
            <DialogInput id="width" label="宽度:" value="21.0000" readOnly />
            <DialogInput id="height" label="高度:" value="29.7000" readOnly />
          </Group>
          <Group title="边距" className="mt-2.5 h-[134px]" body="flex flex-col gap-[5px] pt-1 pl-3">
            <DialogInput id="top" label="上" value="0.2" />
            <DialogInput id="bottom" label="下" value="0.5" />
            <DialogInput id="left" label="左" value="1" />
            <DialogInput id="right" label="右" value="1" />
          </Group>
          <Group title="方向" className="mt-[9px] h-[60px]" body="flex flex-col gap-2.5 pt-0.5 pl-3.5">
            <Radio name="dir" label="纵向" checked />
            <Radio name="dir" label="横向" />
          </Group>
        </div>
        <div className="w-[190px]">
          <Group title="预览" className="h-60" body="pt-[13px] pl-[22px]">
            <svg viewBox="0 0 143 202" className="h-[202px] w-[143px]">
              <path d="M1 1h141v200H1z" fill="#fff" stroke="#222" strokeWidth="1.500" />
              {PREVIEW_LINES.map((y, i) => {
                const end = i % 3 === 2 ? 71 : 136;
                return <path key={y} d={`M7 ${y}.5H${end}M${end - 6} ${y - 2}.5l6 2-6 2`} fill="none" stroke="#bbb" />;
              })}
              <path d="M1 198h7v3M142 198h-6v3" fill="none" stroke="#aaa" />
            </svg>
          </Group>
          <Group title="打印偏移" className="mt-[9px] h-[94px]" body="flex flex-col gap-1 pr-3 pl-2.5">
            <div className="flex items-center justify-between">
              <label htmlFor="dx">右偏移(X):</label>
              <input id="dx" defaultValue="0" className="h-6 w-[51px] border border-[#8a8a8a] bg-white px-1 pb-1" />
            </div>
            <div className="flex items-center justify-between">
              <label htmlFor="dy">下偏移(Y):</label>
              <input id="dy" defaultValue="0" className="h-6 w-[51px] border border-[#8a8a8a] bg-white px-1 pb-1" />
            </div>
            <Check label="保存在本地电脑" gap="gap-[3px]" className="pt-0.5" />
          </Group>
        </div>
      </div>
      <Group title="打印旋转" className="mt-2.5 h-[39px]" body="flex pt-[5px] pl-3">
        <Radio name="rotate" label="不旋转" checked className="w-[104px]" />
        <Radio name="rotate" label="旋转90度" className="w-[107px]" />
        <Radio name="rotate" label="旋转180度" className="w-[110px]" />
        <Radio name="rotate" label="旋转270度" />
      </Group>
      <div className="mt-2 flex gap-[41px] pl-24">
        <button type="button" className="h-[22px] w-[83px] border-2 border-[#0078d7] bg-[#e1e1e1] leading-none">确定</button>
        <button type="button" className="h-[22px] w-[83px] border border-[#adadad] bg-[#e1e1e1] leading-none">取消</button>
      </div>
    </form>
  </div>
);

/* ---------- annotations ---------- */

// tapered arrow: a hairline at the tail that widens up to the head
const arrowPoints = (x1: number, y1: number, x2: number, y2: number) => {
  const len = Math.hypot(x2 - x1, y2 - y1);
  const ux = (x2 - x1) / len;
  const uy = (y2 - y1) / len;
  const at = (back: number, side: number) => `${x2 - ux * back - uy * side},${y2 - uy * back + ux * side}`;
  return [`${x1},${y1}`, at(23, 4.5), at(28, 11), at(0, 0), at(28, -11), at(23, -4.5), `${x1 - uy},${y1 + ux}`].join(' ');
};

const Annotations = () => (
  <div className="pointer-events-none absolute inset-0">
    <svg className="absolute top-0 left-0 h-[1080px] w-[1920px]" fill="#fb5252" stroke="#fb5252" strokeWidth=".6">
      <polygon points={arrowPoints(563, 410, 978, 103)} />
      <polygon points={arrowPoints(1060, 748, 1216, 1003)} />
      <polygon points={arrowPoints(1224, 997, 1415, 418)} />
    </svg>
    <div className="absolute top-[396px] left-[381px] h-[43px] w-[173px] rounded-xs border-4 border-[#fb5252]" />
    <div className="absolute top-[71px] left-[987px] h-[33px] w-[96px] rounded-xs border-4 border-[#fb5252]" />
    <div className="absolute top-[353px] left-[1379px] h-[35px] w-[237px] rounded-xs border-4 border-[#fb5252]" />
    <div className="absolute top-[1026px] left-[1193px] h-[35px] w-[90px] rounded-xs border-4 border-[#fb5252]" />
    <p className="absolute top-[317px] left-[1447px] text-[23px] leading-8 text-[#fb5252]">同步设置打印机</p>
  </div>
);

export default function App() {
  return (
    <div className="relative flex h-screen flex-col overflow-hidden bg-[#f0f7ff] font-['Noto_Sans','Noto_Sans_CJK_SC',sans-serif] text-black">
      <header className="flex h-[55px] shrink-0 items-center justify-between bg-[#3a59aa] pr-[23px] pl-[341px]">
        <h1 className="pt-1 text-[35px] leading-none font-light text-white">参数设置-FK.32.20260110</h1>
        <button aria-label="返回" className="flex size-9 items-center justify-center rounded-full bg-white">
          <svg viewBox="0 0 24 24" className="size-6"><path d="M2 10l9-8v5c8 0 11 5 11 11-3-4-6-5-11-5v5z" fill="#0e9af0" /></svg>
        </button>
      </header>

      <div className="flex min-h-0 flex-1 border-b-2 border-[#777]">
        <aside className="w-[142px] shrink-0 border border-[#6b6b6b] pt-[11px] pl-[11px]">
          <SideNav active="硬件设置" className="h-[420px] w-[119px]" item="h-[42px]" />
        </aside>
        <main className="ml-1 min-w-0 flex-1 border-t border-l border-[#6b6b6b] pt-[10px]">
          <div role="tablist" className="flex gap-1.5 pl-[11px] text-[15px]">
            <button role="tab" aria-selected="true" className="h-11 w-[97px] rounded-sm bg-[#fb3e63] text-white">硬件设置</button>
            <button role="tab" className="h-11 w-[106px] rounded-sm border border-[#cfdffa]">IC设置</button>
            <button role="tab" className="h-11 w-[97px] rounded-sm border border-[#cfdffa]">消磁设备</button>
            <button role="tab" className="h-11 w-[97px] rounded-sm border border-[#cfdffa]">其他设置</button>
          </div>
          <HardwareForm />
        </main>
      </div>

      <div className="absolute top-[27px] right-0 bottom-[13px] left-[654px] flex flex-col border border-r-0 border-[#999] bg-[#ededed] shadow-[0_4px_20px_rgba(0,0,0,0.35)]">
        <header className="flex h-10 shrink-0 items-center justify-between pr-3 pl-[15px]">
          <svg viewBox="0 0 12 16" className="h-4 w-3" fill="none" stroke="#27c777">
            <path d="M2.500.5h7M3.500.5v5L.5 10.500h11l-3-5v-5M6 10.500V16" />
          </svg>
          <div className="flex items-center gap-[34px]">
            <button aria-label="最小化" className="h-px w-2.5 bg-[#222]" />
            <button aria-label="最大化" className="size-2.5 rounded-xs border border-[#222]" />
          </div>
        </header>
        <div className="ml-[18px] flex min-h-0 flex-1 flex-col bg-[#f0f7ff]">
          <div className="h-[5px] shrink-0 bg-[#3a59aa]" />
          <div className="flex min-h-0 flex-1 border-b border-[#777]">
            <aside className="mr-1 w-[138px] shrink-0 border border-b-0 border-[#6b6b6b] pt-2.5 pl-[11px]">
              <SideNav active="小票设置" className="h-[408px] w-[116px]" item="h-[41px]" />
            </aside>
            <Designer />
          </div>
        </div>
      </div>

      <PageSetup />
      <Annotations />
    </div>
  );
}
